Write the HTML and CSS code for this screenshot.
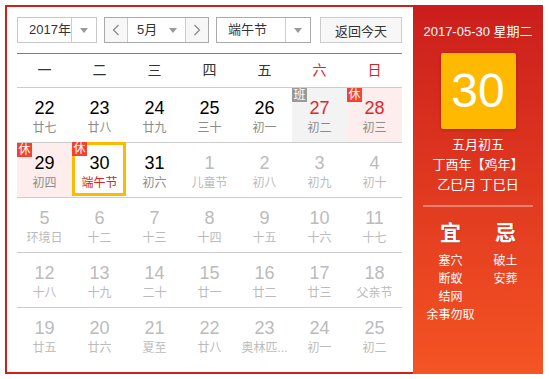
FILE: index.html
```html
<!DOCTYPE html>
<html lang="zh-CN">
<head>
<meta charset="UTF-8" />
<title>万年历</title>
<link rel="stylesheet" href="styles.css">
</head>
<body>
<div class="calendar">
  <div class="main">
    <div class="toolbar">
      <div class="select year-select">
        <span class="select-text">2017年</span>
        <span class="select-arrow"><i class="tri"></i></span>
      </div>
      <div class="month-group">
        <span class="nav-btn">
          <svg width="8" height="12" viewBox="0 0 8 12"><polyline points="6.5,1 1.5,6 6.5,11" fill="none" stroke="#888" stroke-width="1.2"/></svg>
        </span>
        <span class="month-select">
          <span class="select-text">5月</span>
          <i class="tri"></i>
        </span>
        <span class="nav-btn">
          <svg width="8" height="12" viewBox="0 0 8 12"><polyline points="1.5,1 6.5,6 1.5,11" fill="none" stroke="#888" stroke-width="1.2"/></svg>
        </span>
      </div>
      <div class="select holiday-select">
        <span class="select-text">端午节</span>
        <span class="select-arrow"><i class="tri"></i></span>
      </div>
      <button class="today-btn">返回今天</button>
    </div>

    <div class="weekdays">
      <span>一</span><span>二</span><span>三</span><span>四</span><span>五</span>
      <span class="weekend">六</span><span class="weekend">日</span>
    </div>

    <div class="days">
      <div class="day"><b>22</b><em>廿七</em></div>
      <div class="day"><b>23</b><em>廿八</em></div>
      <div class="day"><b>24</b><em>廿九</em></div>
      <div class="day"><b>25</b><em>三十</em></div>
      <div class="day"><b>26</b><em>初一</em></div>
      <div class="day workday"><span class="badge badge-work">班</span><b>27</b><em>初二</em></div>
      <div class="day holiday"><span class="badge">休</span><b>28</b><em>初三</em></div>

      <div class="day holiday"><span class="badge">休</span><b>29</b><em>初四</em></div>
      <div class="day today"><span class="badge">休</span><b>30</b><em>端午节</em></div>
      <div class="day"><b>31</b><em>初六</em></div>
      <div class="day other"><b>1</b><em>儿童节</em></div>
      <div class="day other"><b>2</b><em>初八</em></div>
      <div class="day other"><b>3</b><em>初九</em></div>
      <div class="day other"><b>4</b><em>初十</em></div>

      <div class="day other"><b>5</b><em>环境日</em></div>
      <div class="day other"><b>6</b><em>十二</em></div>
      <div class="day other"><b>7</b><em>十三</em></div>
      <div class="day other"><b>8</b><em>十四</em></div>
      <div class="day other"><b>9</b><em>十五</em></div>
      <div class="day other"><b>10</b><em>十六</em></div>
      <div class="day other"><b>11</b><em>十七</em></div>

      <div class="day other"><b>12</b><em>十八</em></div>
      <div class="day other"><b>13</b><em>十九</em></div>
      <div class="day other"><b>14</b><em>二十</em></div>
      <div class="day other"><b>15</b><em>廿一</em></div>
      <div class="day other"><b>16</b><em>廿二</em></div>
      <div class="day other"><b>17</b><em>廿三</em></div>
      <div class="day other"><b>18</b><em>父亲节</em></div>

      <div class="day other last"><b>19</b><em>廿五</em></div>
      <div class="day other last"><b>20</b><em>廿六</em></div>
      <div class="day other last"><b>21</b><em>夏至</em></div>
      <div class="day other last"><b>22</b><em>廿八</em></div>
      <div class="day other last"><b>23</b><em>奥林匹...</em></div>
      <div class="day other last"><b>24</b><em>初一</em></div>
      <div class="day other last"><b>25</b><em>初二</em></div>
    </div>
  </div>

  <aside class="side">
    <div class="side-date">2017-05-30 星期二</div>
    <div class="big-day">30</div>
    <div class="lunar">
      <p>五月初五</p>
      <p>丁酉年【鸡年】</p>
      <p>乙巳月 丁巳日</p>
    </div>
    <div class="side-line"></div>
    <div class="almanac">
      <div class="almanac-col">
        <h3>宜</h3>
        <p>塞穴</p>
        <p>断蚁</p>
        <p>结网</p>
        <p>余事勿取</p>
      </div>
      <div class="almanac-col">
        <h3>忌</h3>
        <p>破土</p>
        <p>安葬</p>
      </div>
    </div>
  </aside>
</div>
</body>
</html>
```

FILE: styles.css
```css
:root {
--red: #d0201d;
--gray-line: #ccc;
--yellow: #ffb900;
}

body {
margin: 0;
background: #fff;
font-family: "Liberation Sans", Arial, "Noto Sans CJK SC", sans-serif;
color: #333;
}

.calendar {
display: flex;
width: 538px;
height: 369px;
margin: 5px 0 0 5px;
box-shadow: 0 5px 0 #f3f3f3;
}

.main {
width: 385px;
height: 345px;
padding: 10px 11px 10px 10px;
border: 2px solid var(--red);
border-right: none;
background: #fff;
}

/* toolbar */
.toolbar {
display: flex;
align-items: center;
height: 26px;
margin-bottom: 10px;
font-size: 13px;
}

.select {
display: flex;
height: 24px;
border: 1px solid #c8c8c8;
}

.select-text {
flex: 1;
line-height: 24px;
padding-left: 11px;
color: #333;
}

.select-arrow {
width: 24px;
border-left: 1px solid #ccc;
display: flex;
align-items: center;
justify-content: center;
}

.tri {
display: block;
width: 0;
height: 0;
border-left: 4px solid transparent;
border-right: 4px solid transparent;
border-top: 5px solid #999;
}

.year-select {
width: 78px;
}

.month-group {
display: flex;
width: 103px;
height: 24px;
margin-left: 7px;
border: 1px solid #aaa;
}

.nav-btn {
width: 22px;
background: #f7f7f7;
display: flex;
align-items: center;
justify-content: center;
}

.nav-btn:first-child {
border-right: 1px solid #ccc;
}

.nav-btn:last-child {
border-left: 1px solid #ccc;
}

.month-select {
flex: 1;
display: flex;
align-items: center;
padding-right: 8px;
}

.month-select .select-text {
padding-left: 9px;
}

.holiday-select {
width: 93px;
margin-left: 7px;
border-color: #aaa;
}

.today-btn {
width: 82px;
height: 26px;
margin-left: 9px;
padding: 0;
border: 1px solid #ccc;
background: #f7f7f7;
font-family: inherit;
font-size: 13px;
color: #333;
}

/* grid */
.weekdays {
display: grid;
grid-template-columns: repeat(7, 55px);
height: 33px;
border-top: 1px solid #e5574b;
border-bottom: 1px solid var(--gray-line);
font-size: 14px;
line-height: 33px;
text-align: center;
}

.weekend {
color: #d6261f;
}

.days {
display: grid;
grid-template-columns: repeat(7, 55px);
grid-auto-rows: 55px;
}

.day {
position: relative;
border-bottom: 1px solid var(--gray-line);
padding-top: 10px;
text-align: center;
box-sizing: border-box;
}

.day.last {
border-bottom: none;
}

.day b {
display: block;
font-weight: normal;
font-size: 18px;
line-height: 20px;
color: #000;
}

.day em {
display: block;
font-style: normal;
font-size: 12px;
line-height: 20px;
color: #8c8c8c;
white-space: nowrap;
}

.day.other b,
.day.other em {
color: #bbb;
}

.day.workday {
background: #f3f3f3;
}

.day.holiday {
background: #fdeeed;
}

.day.workday b,
.day:nth-child(7) b {
color: #e0262a;
}

.day.today::after {
content: "";
position: absolute;
top: -1px;
left: 0;
width: 54px;
height: 54px;
border: 3px solid var(--yellow);
box-sizing: border-box;
}

.day.today em {
color: #d6261f;
}

.badge {
position: absolute;
top: 0;
left: 0;
z-index: 1;
width: 15px;
height: 14px;
background: #f3432f;
color: #fff;
font-size: 12px;
line-height: 14px;
text-align: center;
}

.day.today .badge {
top: -1px;
}

.badge-work {
background: #999;
}

/* side panel */
.side {
width: 130px;
height: 369px;
background: linear-gradient(to bottom, #cb1e1c, #f55424);
color: #fff;
text-align: center;
padding-top: 17px;
box-sizing: border-box;
}

.side-date {
font-size: 13px;
line-height: 20px;
}

.big-day {
width: 75px;
height: 76px;
margin: 11px auto 0;
background: var(--yellow);
border-radius: 2px;
box-shadow: 0 1px 3px rgba(0,0,0,0.25);
font-size: 48px;
line-height: 76px;
}

.lunar {
margin-top: 6px;
font-size: 13px;
line-height: 20px;
}

.lunar p,
.almanac p {
margin: 0;
}

.side-line {
height: 2px;
margin: 10px 10px 0;
background: rgba(255,255,255,0.35);
}

.almanac {
display: flex;
padding: 0 10px;
margin-top: 13px;
}

.almanac-col {
flex: 1;
}

.almanac h3 {
margin: 0 0 6px;
font-size: 21px;
line-height: 26px;
font-weight: bold;
text-shadow: 1px 1px 1px rgba(0,0,0,0.15);
}

.almanac p {
font-size: 12px;
line-height: 18px;
}
```
